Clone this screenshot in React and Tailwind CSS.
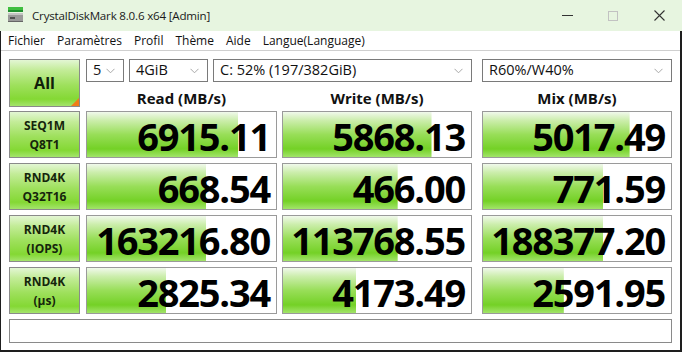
import React from "react";

const rows = [
  { l1: "SEQ1M", l2: "Q8T1", v: [["6915.11", 0.8], ["5868.13", 0.79], ["5017.49", 0.78]] },
  { l1: "RND4K", l2: "Q32T16", v: [["668.54", 0.63], ["466.00", 0.61], ["771.59", 0.64]] },
  { l1: "RND4K", l2: "(IOPS)", v: [["163216.80", 0.63], ["113768.55", 0.61], ["188377.20", 0.64]] },
  { l1: "RND4K", l2: "(µs)", v: [["2825.34", 0.42], ["4173.49", 0.39], ["2591.95", 0.43]] },
];

const colW = ["w-[191px]", "w-[190px]", "w-[190px]"];
const colMl = ["ml-0", "ml-[5px]", "ml-[10px]"];

function Chevron() {
  return (
    <svg width="9" height="6" viewBox="0 0 9 6" className="shrink-0">
      <path d="M0.5 0.8 L4.5 4.8 L8.5 0.8" fill="none" stroke="#a8a8a8" strokeWidth="1" />
    </svg>
  );
}

function Select({ w, text, ml }) {
  return (
    <div className={`${w} ${ml} h-[23px] border border-[#7a7a7a] bg-white flex items-center justify-between pl-[6px] pr-[8px]`}>
      <span className="text-[14.5px] leading-none text-[#111]">{text}</span>
      <Chevron />
    </div>
  );
}

function AppIcon() {
  return (
    <svg width="17" height="17" viewBox="0 0 17 17">
      <rect x="1" y="1" width="15" height="3" fill="#3fbf3f" />
      <rect x="1" y="4" width="15" height="2" fill="#1f8f2f" />
      <rect x="1" y="7" width="15" height="9" fill="#9a9a9a" />
      <rect x="1" y="7" width="15" height="2" fill="#c4c4c4" />
      <rect x="3" y="11" width="5" height="2" fill="#505050" />
      <rect x="1" y="15" width="15" height="1" fill="#666" />
    </svg>
  );
}

export default function App() {
  return (
    <div className="w-[682px] h-[352px] bg-white font-['Open_Sans',sans-serif] flex flex-col overflow-hidden">
      {/* title bar */}
      <div className="h-[31px] bg-[#e7f5e0] flex items-center shrink-0">
        <div className="ml-[7px] mt-[-2px]">
          <AppIcon />
        </div>
        <span className="ml-[8px] text-[11.6px] text-[#1a1a1a] tracking-[-0.2px]">CrystalDiskMark 8.0.6 x64 [Admin]</span>
        <div className="ml-auto flex items-center h-full">
          <div className="w-[46px] h-full flex items-center justify-center">
            <div className="w-[11px] h-[1px] bg-[#333]" />
          </div>
          <div className="w-[46px] h-full flex items-center justify-center">
            <div className="w-[10px] h-[10px] border border-[#c2c2c2]" />
          </div>
          <div className="w-[46px] h-full flex items-center justify-center">
            <svg width="11" height="11" viewBox="0 0 11 11">
              <path d="M0.5 0.5 L10.5 10.5 M10.5 0.5 L0.5 10.5" stroke="#333" strokeWidth="1.1" />
            </svg>
          </div>
        </div>
      </div>

      {/* body with window border */}
      <div className="flex-1 flex flex-col border-l border-r-2 border-b-2 border-[#1e1e1e]">
        {/* menu */}
        <div className="h-[20px] border-b border-[#cfcfcf] flex items-center gap-[12px] pl-[7px] text-[12px] text-[#111] shrink-0">
          <span>Fichier</span>
          <span>Paramètres</span>
          <span>Profil</span>
          <span>Thème</span>
          <span>Aide</span>
          <span>Langue(Language)</span>
        </div>

        {/* content */}
        <div className="flex flex-col pl-[8px] pt-[8px]">
          {/* top row */}
          <div className="flex h-[52px]">
            <div className="relative w-[71px] h-[48px] border border-[#8a8a8a] bg-[linear-gradient(to_bottom,#e3f6d4_0%,#c3ec98_22%,#9ee05c_55%,#84d834_85%,#a4e46c_100%)] flex items-center justify-center">
              <span className="text-[16px] font-bold text-[#10200a]">All</span>
              <div className="absolute right-0 bottom-0 w-0 h-0 border-l-[8px] border-l-transparent border-b-[8px] border-b-[#f07d18]" />
            </div>
            <div className="ml-[6px] flex flex-col">
              <div className="flex">
                <Select w="w-[38px]" text="5" ml="ml-0" />
                <Select w="w-[79px]" text="4GiB" ml="ml-[5px]" />
                <Select w="w-[259px]" text="C: 52% (197/382GiB)" ml="ml-[5px]" />
                <Select w="w-[190px]" text="R60%/W40%" ml="ml-[10px]" />
              </div>
              <div className="flex h-[29px] items-center pt-[4px]">
                {["Read (MB/s)", "Write (MB/s)", "Mix (MB/s)"].map((t, i) => (
                  <div key={t} className={`${colW[i]} ${colMl[i]} text-center text-[15px] font-bold text-[#111]`}>
                    {t}
                  </div>
                ))}
              </div>
            </div>
          </div>

          {/* result rows */}
          <div className="flex flex-col gap-[5px]">
            {rows.map((r, ri) => (
              <div key={ri} className="flex h-[47px]">
                <div className="w-[71px] h-full border border-[#8a8a8a] bg-[linear-gradient(to_bottom,#e3f6d4_0%,#c3ec98_22%,#9ee05c_55%,#84d834_85%,#a4e46c_100%)] flex flex-col items-center justify-center text-[12px] font-bold leading-[19px] text-[#15250c]">
                  <span>{r.l1}</span>
                  <span>{r.l2}</span>
                </div>
                <div className="ml-[6px] flex">
                  {r.v.map(([val, p], i) => (
                    <div
                      key={i}
                      className={`${colW[i]} ${colMl[i]} h-full border border-[#9a9a9a] bg-white bg-no-repeat bg-[linear-gradient(to_bottom,#f1f9ec_0%,#cdeeae_18%,#98de58_50%,#74d126_82%,#a2e46a_100%)] flex items-center justify-end pr-[6px] pt-[3px]`}
                      style={{ backgroundSize: `${p * 100}% 100%` }}
                    >
                      <span className="text-[38px] font-bold leading-none text-black tracking-[-1.2px]">{val}</span>
                    </div>
                  ))}
                </div>
              </div>
            ))}
          </div>

          {/* status bar */}
          <div className="mt-[5px] w-[663px] h-[24px] border border-[#8a8a8a] bg-white" />
        </div>
      </div>
    </div>
  );
}
